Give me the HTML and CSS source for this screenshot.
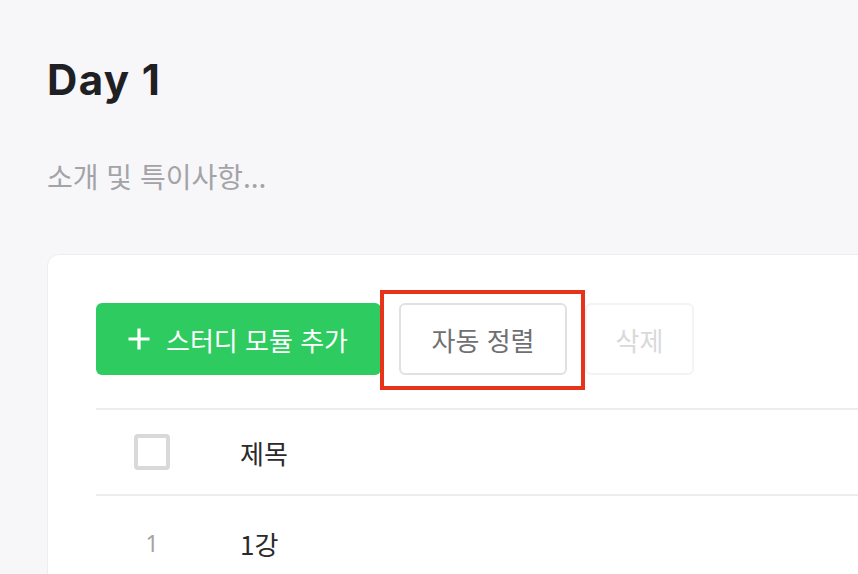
FILE: index.html
```html
<!DOCTYPE html>
<html lang="ko">
<head>
<meta charset="utf-8">
<title>Day 1</title>
<link rel="stylesheet" href="styles.css">
</head>
<body>
<div class="page">
  <h1 class="title">Day 1</h1>
  <p class="intro">소개 및 특이사항...</p>
  <section class="card">
    <div class="toolbar">
      <button class="btn btn-primary">
        <svg class="plus" viewBox="0 0 24 24" width="24" height="24" aria-hidden="true"><path d="M12 1.5v21M1.5 12h21" stroke="#fff" stroke-width="3.2" fill="none"/></svg>
        <span>스터디 모듈 추가</span>
      </button>
      <div class="highlight-wrap">
        <button class="btn btn-outline">자동 정렬</button>
        <span class="highlight"></span>
      </div>
      <button class="btn btn-disabled">삭제</button>
    </div>
    <div class="table">
      <div class="row head">
        <div class="cell idx"><span class="checkbox"></span></div>
        <div class="cell name">제목</div>
      </div>
      <div class="row body-row">
        <div class="cell idx num">1</div>
        <div class="cell name item">1강</div>
      </div>
    </div>
  </section>
</div>
</body>
</html>
```

FILE: styles.css
```css
* { box-sizing: border-box; }
html, body { margin: 0; padding: 0; }
body {
  background: #f7f7f9;
  font-family: "Noto Sans CJK KR", "Noto Sans", sans-serif;
  overflow: hidden;
  height: 574px;
}
.page {
  padding: 55px 0 0 47px;
}
.title {
  margin: 0;
  font-family: Inter, "Noto Sans CJK KR", sans-serif;
  font-weight: 700;
  font-size: 42px;
  line-height: 50px;
  color: #1f2024;
  letter-spacing: 1.4px;
}
.intro {
  margin: 53px 0 0;
  font-size: 28px;
  line-height: 36px;
  color: #a3a3a8;
}
.card {
  margin-top: 60px;
  width: 1000px;
  background: #fff;
  border: 1px solid #ededf0;
  border-radius: 12px;
  padding: 48px 0 0 48px;
  min-height: 400px;
}
.toolbar {
  display: flex;
  align-items: center;
  gap: 18px;
}
.btn {
  height: 72px;
  border-radius: 6px;
  font-family: "Noto Sans CJK KR", sans-serif;
  font-size: 26px;
  padding: 0;
  display: inline-flex;
  align-items: center;
  background: #fff;
  white-space: nowrap;
  cursor: pointer;
}
.btn-primary {
  background: #2ecc60;
  border: none;
  color: #fff;
  padding: 0 0 0 31px;
  gap: 15px;
  width: 285px;
}
.plus { display: block; }
.btn-outline {
  border: 2px solid #e1e1e3;
  color: #707073;
  width: 168px;
  justify-content: center;
}
.btn-disabled {
  border: 2px solid #f3f3f4;
  color: #d9d9db;
  width: 109px;
  justify-content: center;
}
.highlight-wrap {
  position: relative;
}
.highlight {
  position: absolute;
  left: -19px;
  top: -13px;
  right: -18px;
  bottom: -15px;
  border: 4px solid #e8331b;
  pointer-events: none;
}
.table {
  margin-top: 33px;
  border-top: 2px solid #ececee;
}
.row {
  display: flex;
  align-items: center;
  height: 86px;
  border-bottom: 2px solid #ececee;
}
.row.body-row {
  height: 96px;
}
.cell.idx {
  width: 112px;
  display: flex;
  justify-content: center;
}
.cell.name {
  padding-left: 32px;
  font-size: 26px;
  color: #2a2a2c;
}
.checkbox {
  width: 36px;
  height: 36px;
  border: 4px solid #d9d9db;
  border-radius: 4px;
  background: #fff;
}
.num {
  font-size: 23px;
  color: #a3a3a6;
  font-family: "Noto Sans", sans-serif;
}
.item {
  color: #222;
}
```
